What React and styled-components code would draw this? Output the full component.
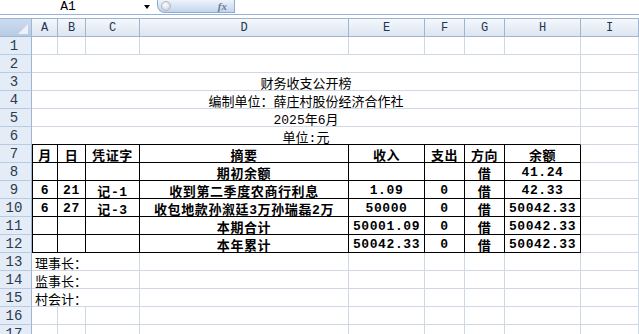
import React from 'react';
import styled, { createGlobalStyle } from 'styled-components';

const GlobalStyle = createGlobalStyle`
  body {
    margin: 0;
    background: #fff;
    overflow: hidden;
  }
`;

const COLS = ['A', 'B', 'C', 'D', 'E', 'F', 'G', 'H', 'I'];
const GRID = '#d0d7e5';
const HEAD_LINE = '#9eb6ce';
const CELL_FONT = '"Liberation Mono", "Noto Sans CJK SC", monospace';

const Window = styled.div`
  width: 639px;
  height: 334px;
  overflow: hidden;
  background: #fff;
`;

const FormulaBar = styled.div`
  height: 14px;
  border-bottom: 1px solid #98b4d8;
  display: flex;
  align-items: flex-start;
`;

const NameBox = styled.div`
  width: 136px;
  text-align: center;
  font: 13px "Liberation Mono", monospace;
  color: #000;
  line-height: 13px;
`;

const DropArrow = styled.div`
  width: 21px;
  height: 13px;
  display: flex;
  align-items: center;
  justify-content: center;
  &::after {
    content: '';
    border-left: 3px solid transparent;
    border-right: 3px solid transparent;
    border-top: 4px solid #000;
  }
`;

const FxPill = styled.div`
  box-sizing: border-box;
  width: 78px;
  height: 13px;
  border: 1px solid #8eaccf;
  border-top: none;
  border-radius: 0 0 0 8px;
  background: linear-gradient(#eef4fb, #c2d5ee);
  display: flex;
  align-items: center;
  justify-content: space-between;
  padding: 0 7px 0 3px;
`;

const Knob = styled.span`
  width: 8px;
  height: 8px;
  border-radius: 50%;
  background: radial-gradient(circle at 40% 35%, #fff, #c4c8ce);
  border: 1px solid #b0b8c4;
`;

const Fx = styled.span`
  font: italic 700 11px/12px "Liberation Serif", serif;
  color: #6c7b90;
`;

const Gap = styled.div`
  height: 3px;
`;

const Sheet = styled.div`
  display: grid;
  grid-template-columns: 32px 26px 28px 54px 209px 76px 40px 40px 76px 1fr;
  grid-auto-rows: 18px;
  border-top: 1px solid #98b4d8;
`;

const Corner = styled.div`
  position: relative;
  box-sizing: border-box;
  background: linear-gradient(#cddbef, #b7cbe6);
  border-right: 1px solid ${HEAD_LINE};
  border-bottom: 1px solid ${HEAD_LINE};
  &::after {
    content: '';
    position: absolute;
    right: 3px;
    bottom: 2px;
    border-left: 10px solid transparent;
    border-bottom: 10px solid #eef2f8;
  }
`;

const ColHead = styled.div`
  box-sizing: border-box;
  background: linear-gradient(#f5f8fc, #dce5f1);
  border-right: 1px solid ${HEAD_LINE};
  border-bottom: 1px solid ${HEAD_LINE};
  display: flex;
  align-items: center;
  justify-content: center;
  font: 12px "Liberation Mono", monospace;
  color: #1f3550;
`;

const RowHead = styled.div`
  box-sizing: border-box;
  background: #e4ecf7;
  border-right: 1px solid ${HEAD_LINE};
  border-bottom: 1px solid #b9cbe3;
  display: flex;
  align-items: center;
  justify-content: center;
  padding: 1px 3px 0 0;
  font: 14px "Liberation Mono", monospace;
  color: #2b3b4f;
`;

const Cell = styled.div`
  box-sizing: border-box;
  grid-column: span ${p => p.$span || 1};
  border-right: 1px solid ${p => (p.$dark ? '#000' : GRID)};
  border-bottom: 1px solid ${p => (p.$dark || p.$darkBottom ? '#000' : GRID)};
  border-left: ${p => (p.$darkLeft ? '1px solid #000' : 'none')};
  display: flex;
  align-items: center;
  justify-content: ${p => (p.$left ? 'flex-start' : 'center')};
  padding: 1px 3px 0;
  white-space: nowrap;
  font-family: ${CELL_FONT};
  font-size: 13px;
  font-weight: ${p => (p.$bold ? 700 : 400)};
  letter-spacing: ${p => (p.$bold ? '0.6px' : '0')};
  color: #000;
`;

const titles = [
  '',
  '财务收支公开榜',
  '编制单位：薛庄村股份经济合作社',
  '2025年6月',
  '单位:元',
];

const table = [
  ['月', '日', '凭证字', '摘要', '收入', '支出', '方向', '余额'],
  ['', '', '', '期初余额', '', '', '借', '41.24'],
  ['6', '21', '记-1', '收到第二季度农商行利息', '1.09', '0', '借', '42.33'],
  ['6', '27', '记-3', '收包地款孙溆廷3万孙瑞磊2万', '50000', '0', '借', '50042.33'],
  ['', '', '', '本期合计', '50001.09', '0', '借', '50042.33'],
  ['', '', '', '本年累计', '50042.33', '0', '借', '50042.33'],
];

const signers = ['理事长：', '监事长：', '村会计：'];

function PlainRow({ n }) {
  return (
    <>
      <RowHead>{n}</RowHead>
      {COLS.map(c => <Cell key={c} />)}
    </>
  );
}

export default function App() {
  let n = 1;
  return (
    <Window>
      <GlobalStyle />
      <FormulaBar>
        <NameBox>A1</NameBox>
        <DropArrow />
        <FxPill>
          <Knob />
          <Fx>fx</Fx>
        </FxPill>
      </FormulaBar>
      <Gap />
      <Sheet>
        <Corner />
        {COLS.map(c => <ColHead key={c}>{c}</ColHead>)}

        <PlainRow n={n++} />

        {titles.map((t, i) => (
          <React.Fragment key={'t' + i}>
            <RowHead>{n++}</RowHead>
            <Cell $span={8} $darkBottom={i === titles.length - 1}>{t}</Cell>
            <Cell />
          </React.Fragment>
        ))}

        {table.map((row, r) => (
          <React.Fragment key={'r' + r}>
            <RowHead>{n++}</RowHead>
            {row.map((v, c) => (
              <Cell key={c} $dark $bold $darkLeft={c === 0}>{v}</Cell>
            ))}
            <Cell />
          </React.Fragment>
        ))}

        {signers.map(s => (
          <React.Fragment key={s}>
            <RowHead>{n++}</RowHead>
            <Cell $span={3} $left>{s}</Cell>
            {COLS.slice(3).map(c => <Cell key={c} />)}
          </React.Fragment>
        ))}

        <PlainRow n={16} />
        <PlainRow n={17} />
      </Sheet>
    </Window>
  );
}
